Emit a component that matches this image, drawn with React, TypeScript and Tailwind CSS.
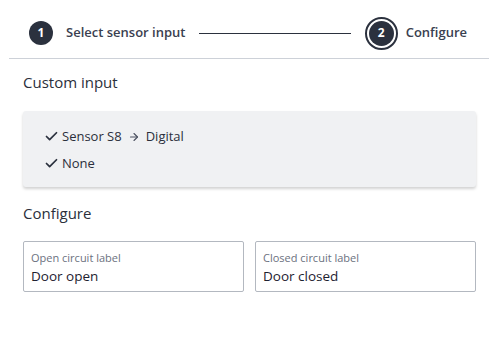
import { Check, ArrowRight } from "lucide-react";

const font = { fontFamily: '"Open Sans", "Noto Sans", sans-serif' };

function Field({ label, value }: { label: string; value: string }) {
  return (
    <div className="flex-1 h-[51px] border border-[#b3b8c0] rounded-[2px] px-[7px] pt-[9px]">
      <div className="text-[11px] leading-[14px] text-[#6b7180]">{label}</div>
      <div className="text-[13.5px] leading-[20px] text-[#1d2230] mt-[1px]">{value}</div>
    </div>
  );
}

export default function App() {
  return (
    <div className="w-[498px] h-[342px] bg-white text-[#2b2f3b]" style={font}>
      {/* Stepper */}
      <div className="mx-[9px] h-[59px] border-b border-[#cdd1d8] flex items-center pl-[20px] pr-[22px] pt-[8px]">
        <div className="w-[24px] h-[24px] rounded-full bg-[#2b313e] text-white text-[12px] font-bold flex items-center justify-center">
          1
        </div>
        <span className="ml-[13px] text-[13px] font-semibold text-[#3a4050]">Select sensor input</span>
        <div className="flex-1 h-[1px] bg-[#2b313e] mx-[14px]" />
        <div className="w-[33px] h-[33px] rounded-full border-2 border-[#2b313e] p-[2px]">
          <div className="w-full h-full rounded-full bg-[#2b313e] text-white text-[12px] font-bold flex items-center justify-center">
            2
          </div>
        </div>
        <span className="ml-[8px] text-[13px] font-semibold text-[#3a4050]">Configure</span>
      </div>

      <div className="px-[23px] pr-[22px]">
        <div className="mt-[12px] text-[15px] leading-[22px] text-[#2b2f3b]">Custom input</div>

        <div className="mt-[18px] h-[76px] bg-[#f0f1f3] rounded-[3px] shadow-[0_2px_3px_rgba(0,0,0,0.18)] pl-[21px] pt-[16px] flex flex-col gap-[8px]">
          <div className="flex items-center h-[19px] text-[13px]">
            <Check size={15} strokeWidth={2.8} className="text-[#2b313e]" />
            <span className="ml-[3px]">Sensor S8</span>
            <ArrowRight size={12} strokeWidth={2.2} className="ml-[6px] text-[#4a5060]" />
            <span className="ml-[6px]">Digital</span>
          </div>
          <div className="flex items-center h-[19px] text-[13px]">
            <Check size={15} strokeWidth={2.8} className="text-[#2b313e]" />
            <span className="ml-[3px]">None</span>
          </div>
        </div>

        <div className="mt-[15px] text-[15px] leading-[22px]">Configure</div>

        <div className="mt-[17px] flex gap-[11px]">
          <Field label="Open circuit label" value="Door open" />
          <Field label="Closed circuit label" value="Door closed" />
        </div>
      </div>
    </div>
  );
}
